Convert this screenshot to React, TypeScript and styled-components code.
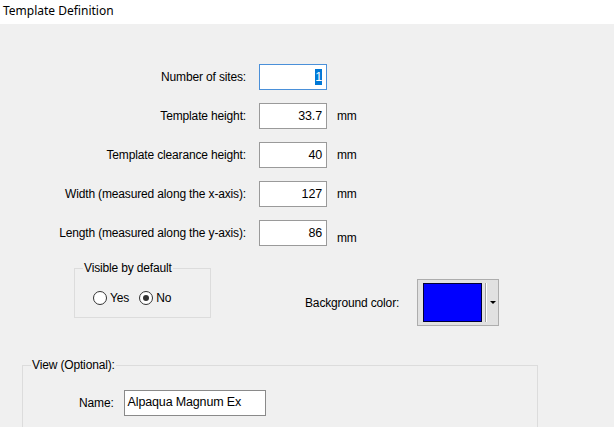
import React from 'react';
import styled, { createGlobalStyle } from 'styled-components';

interface FieldRow {
  label: string;
  value: string;
  unit?: string;
  focused?: boolean;
  lowUnit?: boolean;
}

const rows: FieldRow[] = [
  { label: 'Number of sites:', value: '1', focused: true },
  { label: 'Template height:', value: '33.7', unit: 'mm' },
  { label: 'Template clearance height:', value: '40', unit: 'mm' },
  { label: 'Width (measured along the x-axis):', value: '127', unit: 'mm' },
  { label: 'Length (measured along the y-axis):', value: '86', unit: 'mm', lowUnit: true },
];

const GlobalStyle = createGlobalStyle`
  html, body {
    margin: 0;
    padding: 0;
    background: #f0f0f0;
    overflow: hidden;
  }
  body {
    font-family: "Liberation Sans", Arial, sans-serif;
    font-size: 12px;
    letter-spacing: -0.15px;
    color: #000;
  }
`;

const Window = styled.div`
  width: 614px;
  height: 427px;
  display: flex;
  flex-direction: column;
  overflow: hidden;
`;

const TitleBar = styled.div`
  height: 24px;
  background: #ffffff;
  padding-left: 3px;
  font-family: "Noto Sans", "Open Sans", sans-serif;
  font-size: 12px;
  letter-spacing: 0;
  line-height: 21px;
  color: #000;
  flex-shrink: 0;
`;

const Body = styled.div`
  display: flex;
  flex-direction: column;
`;

const FormGrid = styled.div`
  display: grid;
  grid-template-columns: 259px 68px auto;
  row-gap: 13px;
  margin-top: 40px;
  align-items: center;
`;

const Label = styled.span`
  text-align: right;
  padding-right: 13px;
  line-height: 14px;
`;

const Edit = styled.div<{ $focused?: boolean }>`
  box-sizing: border-box;
  height: 26px;
  background: #ffffff;
  border: 1px solid ${p => (p.$focused ? '#4a90d9' : '#9a9a9a')};
  text-align: right;
  padding-right: 4px;
  line-height: 24px;
  font-size: 12.5px;
`;

const Selected = styled.span`
  background: #0078d7;
  color: #ffffff;
  padding: 1px 0;
`;

const Unit = styled.span<{ $low?: boolean }>`
  padding-left: 10px;
  line-height: 14px;
  align-self: ${p => (p.$low ? 'end' : 'center')};
  padding-bottom: ${p => (p.$low ? '1px' : '0')};
`;

const MiddleRow = styled.div`
  display: flex;
  align-items: flex-start;
  margin-top: 15px;
`;

const GroupBox = styled.fieldset<{ $width: number; $height: number; $left: number }>`
  box-sizing: border-box;
  margin: 0 0 0 ${p => p.$left}px;
  width: ${p => p.$width}px;
  height: ${p => p.$height}px;
  padding: 0 0 0 8px;
  border: 1px solid #dcdcdc;
  min-width: 0;
`;

const Legend = styled.legend`
  padding: 0 1px;
  line-height: 14px;
`;

const RadioRow = styled.div`
  display: flex;
  align-items: center;
  gap: 10px;
  margin: 16px 0 0 10px;
`;

const RadioItem = styled.label`
  display: flex;
  align-items: center;
  gap: 3px;
  line-height: 14px;
`;

const RadioCircle = styled.span<{ $checked?: boolean }>`
  box-sizing: border-box;
  width: 14px;
  height: 14px;
  border-radius: 50%;
  border: 1px solid #333333;
  background: #ffffff;
  display: flex;
  align-items: center;
  justify-content: center;

  &::after {
    content: '';
    width: 6px;
    height: 6px;
    border-radius: 50%;
    background: ${p => (p.$checked ? '#333333' : 'transparent')};
  }
`;

const ColorGroup = styled.div`
  display: flex;
  align-items: center;
  margin: 18px 0 0 94px;
`;

const ColorLabel = styled.span`
  width: 112px;
`;

const ColorButton = styled.div`
  box-sizing: border-box;
  width: 82px;
  height: 47px;
  border: 1px solid #adadad;
  background: #e1e1e1;
  display: flex;
  align-items: center;
  padding-left: 5px;
`;

const Swatch = styled.div<{ $color: string }>`
  box-sizing: border-box;
  width: 59px;
  height: 39px;
  background: ${p => p.$color};
  border: 1px solid #000033;
`;

const Divider = styled.div`
  width: 1px;
  height: 39px;
  margin-left: 3px;
  background: #a0a0a0;
  box-shadow: 1px 0 0 #ffffff;
`;

const Arrow = styled.div`
  margin-left: 4px;
  width: 0;
  height: 0;
  border-left: 3px solid transparent;
  border-right: 3px solid transparent;
  border-top: 3px solid #000;
`;

const ViewSection = styled.div`
  margin-top: 32px;
`;

const NameRow = styled.div`
  display: flex;
  align-items: center;
  gap: 10px;
  margin: 18px 0 0 48px;
`;

const NameEdit = styled.div`
  box-sizing: border-box;
  width: 142px;
  height: 26px;
  background: #ffffff;
  border: 1px solid #8a8a8a;
  padding-left: 3px;
  line-height: 22px;
  font-size: 12.5px;
`;

export default function App() {
  return (
    <Window>
      <GlobalStyle />
      <TitleBar>Template Definition</TitleBar>
      <Body>
        <FormGrid>
          {rows.map(row => (
            <React.Fragment key={row.label}>
              <Label>{row.label}</Label>
              <Edit $focused={row.focused}>
                {row.focused ? <Selected>{row.value}</Selected> : row.value}
              </Edit>
              <Unit $low={row.lowUnit}>{row.unit ?? ''}</Unit>
            </React.Fragment>
          ))}
        </FormGrid>

        <MiddleRow>
          <GroupBox $left={74} $width={137} $height={57}>
            <Legend>Visible by default</Legend>
            <RadioRow>
              <RadioItem>
                <RadioCircle />
                Yes
              </RadioItem>
              <RadioItem>
                <RadioCircle $checked />
                No
              </RadioItem>
            </RadioRow>
          </GroupBox>
          <ColorGroup>
            <ColorLabel>Background color:</ColorLabel>
            <ColorButton>
              <Swatch $color="#0000ff" />
              <Divider />
              <Arrow />
            </ColorButton>
          </ColorGroup>
        </MiddleRow>

        <ViewSection>
          <GroupBox $left={22} $width={516} $height={120}>
            <Legend>View (Optional):</Legend>
            <NameRow>
              <span>Name:</span>
              <NameEdit>Alpaqua Magnum Ex</NameEdit>
            </NameRow>
          </GroupBox>
        </ViewSection>
      </Body>
    </Window>
  );
}
